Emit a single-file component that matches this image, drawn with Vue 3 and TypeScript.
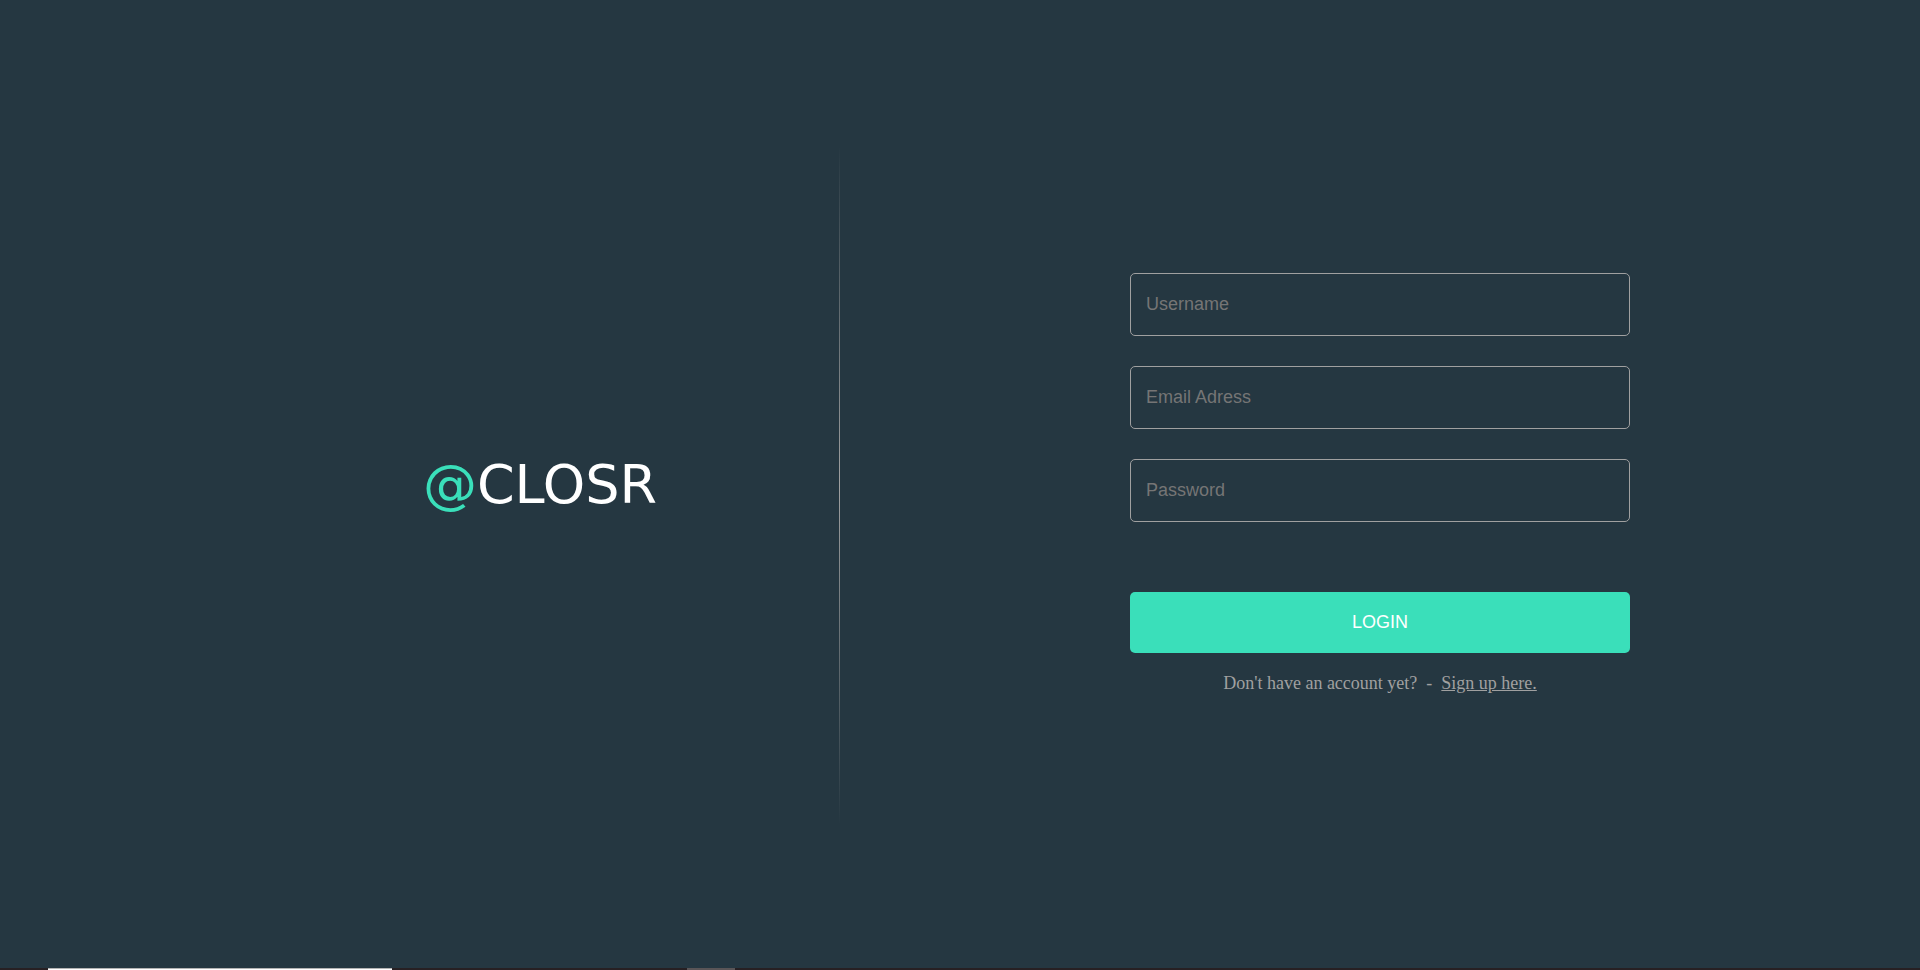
<script setup lang="ts">
import { reactive } from 'vue'

interface Field {
  key: 'username' | 'email' | 'password'
  type: string
  label: string
  autocomplete: string
}

const fields: Field[] = [
  { key: 'username', type: 'text', label: 'Username', autocomplete: 'username' },
  { key: 'email', type: 'email', label: 'Email Adress', autocomplete: 'email' },
  { key: 'password', type: 'password', label: 'Password', autocomplete: 'current-password' },
]

const form = reactive({ username: '', email: '', password: '' })
</script>

<template>
  <main class="page">
    <section class="brand">
      <h1 class="logo"><span class="at">@</span>CLOSR</h1>
    </section>
    <div class="divider"></div>
    <section class="panel">
      <form class="login" @submit.prevent>
        <div class="fields">
          <input
            v-for="field in fields"
            :id="field.key"
            :key="field.key"
            v-model="form[field.key]"
            class="field"
            :type="field.type"
            :placeholder="field.label"
            :aria-label="field.label"
            :autocomplete="field.autocomplete"
          />
        </div>
        <button class="submit" type="submit">LOGIN</button>
        <p class="signup">Don't have an account yet?&nbsp; -&nbsp; <a href="#">Sign up here.</a></p>
      </form>
    </section>
    <div class="strip"><span class="strip-light"></span><span class="strip-grey"></span></div>
  </main>
</template>

<style>
body {
  margin: 0;
  background: #253741;
}
</style>

<style scoped>
.page {
  display: grid;
  grid-template-columns: 7fr 0 9fr;
  align-items: center;
  min-height: 100vh;
  background: #253741;
}
.brand {
  display: flex;
  justify-content: center;
  padding-left: 12.5vw;
}
.logo {
  margin: 0;
  color: #fff;
  font: 400 54px/60px "DejaVu Sans", sans-serif;
}
.at {
  color: #3adfba;
}
.divider {
  justify-self: end;
  width: 1px;
  height: 70vh;
  background: linear-gradient(transparent, #a0a0a0, transparent);
}
.panel {
  display: flex;
  justify-content: center;
}
.login {
  width: 500px;
  max-width: 90%;
  padding-bottom: 4px;
}
.fields {
  display: grid;
  gap: 30px;
  margin-bottom: 70px;
}
.field {
  box-sizing: border-box;
  width: 100%;
  height: 63px;
  padding: 20px 15px;
  border: 1px solid #a0a0a0;
  border-radius: 5px;
  background: transparent;
  color: #fff;
  font: 18px "Liberation Sans", Arial, sans-serif;
}
.field::placeholder {
  color: #757575;
}
.submit {
  display: block;
  width: 100%;
  padding: 20px;
  border: 0;
  border-radius: 5px;
  background: #3adfba;
  color: #fff;
  font: 18px/21px "Liberation Sans", Arial, sans-serif;
  cursor: pointer;
}
.signup {
  margin: 20px 0 0;
  color: #a0a0a0;
  font: 18px/21px "Liberation Serif", "Times New Roman", serif;
  text-align: center;
}
.signup a {
  color: inherit;
}
.strip {
  position: fixed;
  inset: auto 0 0;
  display: flex;
  height: 2px;
  background: #272023;
}
.strip-light {
  width: 344px;
  margin-left: 48px;
  background: linear-gradient(#b4b4b4 50%, #fff 50%);
}
.strip-grey {
  width: 48px;
  margin-left: 295px;
  background: #5a5557;
}
</style>
